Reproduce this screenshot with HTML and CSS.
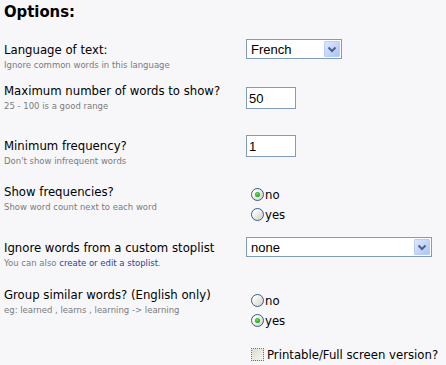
FILE: index.html
```html
<!DOCTYPE html>
<html>
<head>
<meta charset="utf-8">
<link rel="stylesheet" href="styles.css">
</head>
<body>
<div class="opts">
  <h1 class="title">Options:</h1>

  <div class="row r1">
    <div class="lab"><div class="q">Language of text:</div><div class="hint">Ignore common words in this language</div></div>
    <div class="ctl"><span class="sel sel-short">French<span class="btn"><svg width="16" height="18" viewBox="0 0 16 18"><path d="M4.5 7.5 L8 11 L11.5 7.5" fill="none" stroke="#4d6185" stroke-width="2"/></svg></span></span></div>
  </div>

  <div class="row r2">
    <div class="lab"><div class="q">Maximum number of words to show?</div><div class="hint">25 - 100 is a good range</div></div>
    <div class="ctl"><span class="txt">50</span></div>
  </div>

  <div class="row r3">
    <div class="lab"><div class="q">Minimum frequency?</div><div class="hint">Don't show infrequent words</div></div>
    <div class="ctl"><span class="txt">1</span></div>
  </div>

  <div class="row r4">
    <div class="lab"><div class="q">Show frequencies?</div><div class="hint">Show word count next to each word</div></div>
    <div class="ctl">
      <div class="opt"><span class="radio on"></span>no</div>
      <div class="opt"><span class="radio"></span>yes</div>
    </div>
  </div>

  <div class="row r5">
    <div class="lab"><div class="q">Ignore words from a custom stoplist</div><div class="hint">You can also <span class="link">create or edit a stoplist</span>.</div></div>
    <div class="ctl"><span class="sel sel-long">none<span class="btn"><svg width="16" height="18" viewBox="0 0 16 18"><path d="M4.5 7.5 L8 11 L11.5 7.5" fill="none" stroke="#4d6185" stroke-width="2"/></svg></span></span></div>
  </div>

  <div class="row r6">
    <div class="lab"><div class="q">Group similar words? (English only)</div><div class="hint">eg: learned , learns , learning -&gt; learning</div></div>
    <div class="ctl">
      <div class="opt"><span class="radio"></span>no</div>
      <div class="opt"><span class="radio on"></span>yes</div>
    </div>
  </div>

  <div class="row r7">
    <div class="lab"></div>
    <div class="ctl"><div class="opt"><span class="check"></span>Printable/Full screen version?</div></div>
  </div>
</div>
</body>
</html>
```

FILE: styles.css
```css
html, body {
  margin: 0;
  padding: 0;
  background: #f7f7fa;
}
body {
  font-family: "DejaVu Sans Condensed", "DejaVu Sans", sans-serif;
  font-size: 13px;
  color: #000;
}
.opts {
  padding-left: 4px;
}
.title {
  margin: 0;
  height: 39px;
  font-size: 16.5px;
  line-height: 22px;
  font-weight: bold;
  box-sizing: border-box;
  padding-top: 1px;
}
.row {
  display: flex;
  align-items: flex-start;
  box-sizing: border-box;
}
.lab {
  width: 242px;
  flex: none;
}
.q {
  line-height: 16px;
  white-space: nowrap;
}
.hint {
  font-family: "DejaVu Sans", sans-serif;
  font-size: 8.5px;
  line-height: 11px;
  color: #7b7b7b;
  margin-top: 2px;
  white-space: nowrap;
}
.link {
  color: #1f45a5;
}
.ctl {
  flex: none;
}
.r1 { height: 44px; }
.r1 .lab { margin-top: 3px; }
.r2 { height: 52px; }
.r2 .ctl { margin-top: 4px; }
.r3 { height: 49px; }
.r3 .lab { margin-top: 3px; }
.r4 { height: 53px; }
.r4 .ctl { margin-top: 0; }
.r5 { height: 50px; }
.r5 .lab { margin-top: 3px; }
.r6 { height: 57px; }
.r6 .ctl { margin-top: 3px; }
.r7 { height: 21px; }
.r7 .ctl { margin-top: 0; }

.sel {
  display: flex;
  align-items: center;
  justify-content: space-between;
  box-sizing: border-box;
  height: 20px;
  border: 1px solid #7f9db9;
  background: #fff;
  font-family: "Liberation Sans", Arial, sans-serif;
  font-size: 13px;
  padding-left: 4px;
  padding-right: 1px;
}
.sel-short { width: 96px; }
.sel-long { width: 186px; }
.btn {
  display: block;
  width: 16px;
  height: 16px;
  background: linear-gradient(135deg, #dde7fe 0%, #c3d4fb 55%, #adc3f4 100%);
  border: 1px solid #bacdf6;
  box-sizing: border-box;
  border-radius: 1px;
  overflow: hidden;
}
.btn svg {
  display: block;
  margin: -2px 0 0 -1px;
}
.txt {
  display: flex;
  align-items: center;
  box-sizing: border-box;
  width: 50px;
  height: 22px;
  border: 1px solid #7f9db9;
  background: #fff;
  font-family: "Liberation Sans", Arial, sans-serif;
  font-size: 13px;
  padding-left: 2px;
}
.opt {
  display: flex;
  align-items: center;
  height: 20px;
  padding-left: 5px;
  white-space: nowrap;
}
.radio {
  position: relative;
  flex: none;
  width: 13px;
  height: 13px;
  box-sizing: border-box;
  border: 1px solid #2f5c8f;
  border-radius: 50%;
  background: linear-gradient(135deg, #ffffff 15%, #e6e6e0 60%, #d2d2ca 100%);
  margin-right: 1px;
}
.radio.on::after {
  content: "";
  position: absolute;
  left: 3px;
  top: 3px;
  width: 5px;
  height: 5px;
  border-radius: 50%;
  background: radial-gradient(circle at 45% 40%, #7ee07e 0%, #2fb52f 45%, #1c8e1c 100%);
}
.check {
  flex: none;
  width: 13px;
  height: 13px;
  box-sizing: border-box;
  border: 1px dotted #a8673a;
  background: linear-gradient(135deg, #dcdad0 0%, #ecebe4 60%, #f6f6f2 100%);
  margin-right: 3px;
}
```
